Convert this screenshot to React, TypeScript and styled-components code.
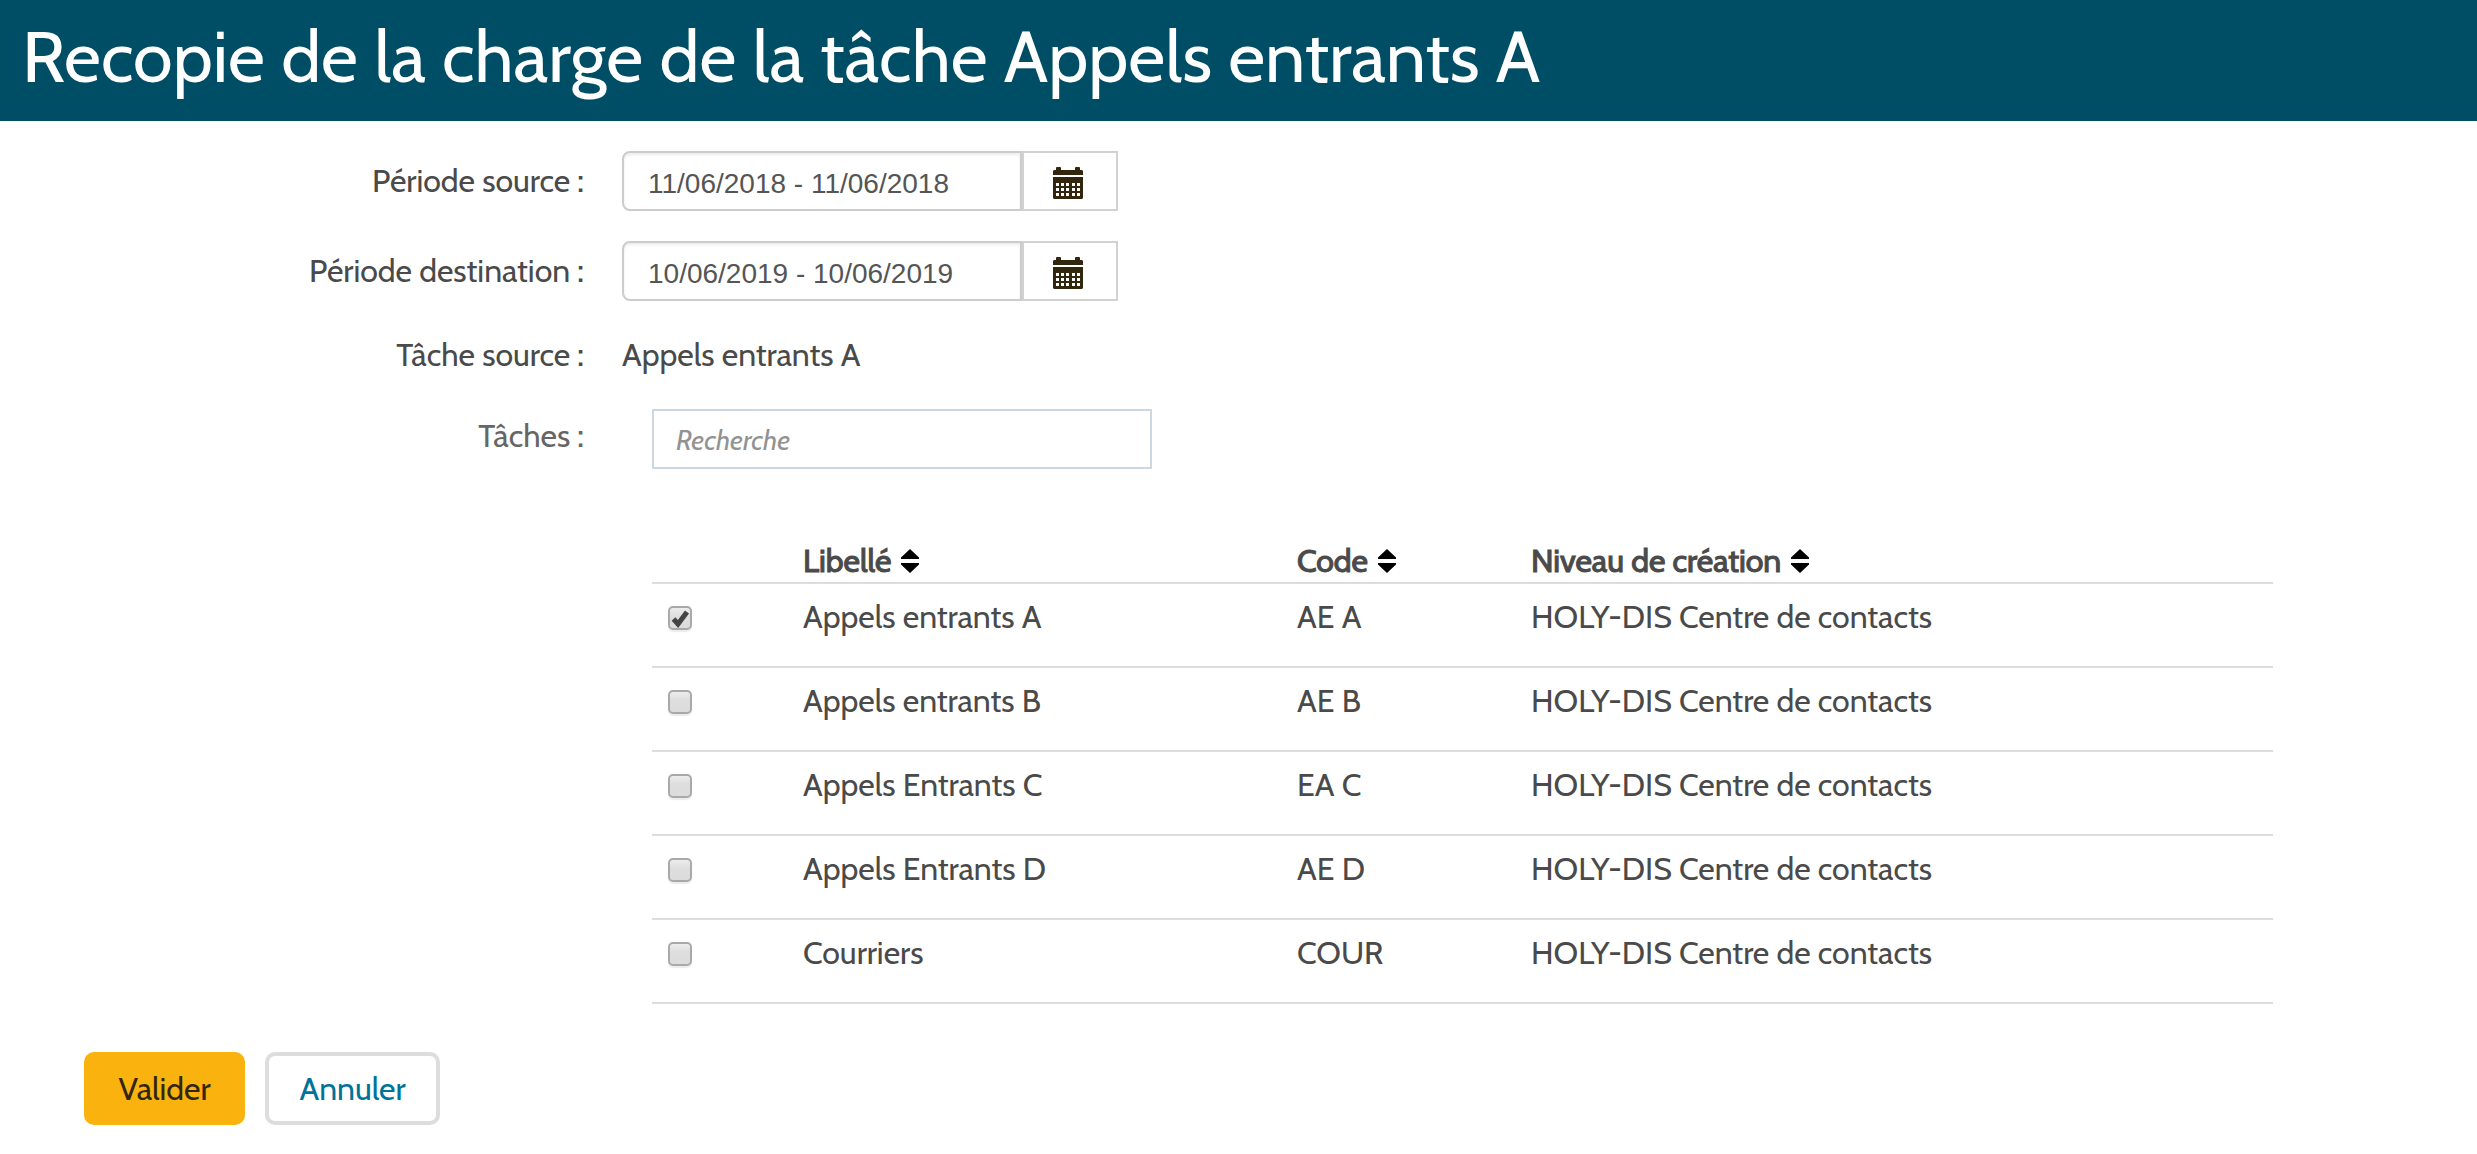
import React, { useState } from "react";
import styled, { createGlobalStyle } from "styled-components";

const GlobalStyle = createGlobalStyle`
  *, *::before, *::after { box-sizing: border-box; }
  body {
    margin: 0;
    background: #fff;
    color: #4a4a4a;
    font-family: Cabin, Lato, "Liberation Sans", sans-serif;
    font-size: 32px;
    line-height: 40px;
  }
  button, input { font: inherit; color: inherit; }
`;

const Header = styled.header`
  background: #004e66;
  color: #fff;
  padding: 13px 22px 20px;
`;

const Title = styled.h1`
  margin: 0;
  font-size: 72px;
  line-height: 88px;
  font-weight: 400;
`;

const Form = styled.form`
  display: flex;
  flex-direction: column;
  padding: 30px 204px 0 0;
`;

const Field = styled.div<{ $gap: number; $top: number; $muted?: boolean }>`
  display: grid;
  grid-template-columns: 584px minmax(0, 1fr);
  column-gap: 38px;
  margin-bottom: ${(p) => p.$gap}px;

  & > :first-child {
    text-align: right;
    padding-top: ${(p) => p.$top}px;
    color: ${(p) => (p.$muted ? "#666" : "inherit")};
  }
`;

const FieldName = styled.span``;
const FieldLabel = styled.label``;

const SourceTask = styled.output`
  padding-top: 4px;
`;

const DateGroup = styled.div`
  display: flex;
  height: 60px;
`;

const DateInput = styled.input`
  width: 400px;
  padding: 6px 24px 0;
  border: 2px solid #ccc;
  border-radius: 8px 0 0 8px;
  box-shadow: inset 0 2px 3px rgba(0, 0, 0, 0.08);
  background: #fff;
  color: #555;
  font-family: "Liberation Sans", Arial, sans-serif;
  font-size: 28px;
  outline: none;
`;

const CalendarButton = styled.button`
  display: flex;
  align-items: center;
  justify-content: center;
  width: 96px;
  padding: 4px 4px 0 0;
  border: 2px solid #d2d2d2;
  background: #fff;
  cursor: pointer;
`;

const SearchInput = styled.input`
  width: 500px;
  height: 60px;
  margin-left: 30px;
  padding: 2px 22px 0;
  border: 2px solid #cbd8e1;
  background: #fff;
  font-size: 28px;
  outline: none;

  &::placeholder {
    color: #929292;
    font-style: italic;
    opacity: 1;
  }
`;

const TaskTable = styled.table`
  margin-left: 652px;
  border-collapse: separate;
  border-spacing: 0;
  table-layout: fixed;
`;

const Column = styled.col<{ $width?: number }>`
  width: ${(p) => (p.$width ? `${p.$width}px` : "auto")};
`;

const HeadCell = styled.th`
  padding: 0 0 1px;
  border-bottom: 2px solid #ddd;
  text-align: left;
  font-weight: 400;
  -webkit-text-stroke: 1px currentColor;
`;

const SortButton = styled.button`
  display: flex;
  align-items: center;
  gap: 10px;
  padding: 0;
  border: 0;
  background: none;
  cursor: pointer;
`;

const Cell = styled.td`
  height: 84px;
  padding: 13px 0 0;
  border-bottom: 2px solid #ddd;
  vertical-align: top;
`;

const CheckCell = styled(Cell)`
  padding: 22px 0 0 16px;
`;

const CheckFrame = styled.span`
  display: grid;
  width: 24px;
  height: 24px;

  & > * { grid-area: 1 / 1; }
`;

const CheckBox = styled.input`
  appearance: none;
  width: 24px;
  height: 24px;
  margin: 0;
  border: 2px solid #a9a9a9;
  border-radius: 5px;
  background: linear-gradient(#ededed, #dedede 40%, #dcdcdc);
  box-shadow: 0 2px 1px rgba(0, 0, 0, 0.08);
  cursor: pointer;
`;

const CheckMark = styled.svg`
  pointer-events: none;
`;

const Actions = styled.div`
  display: flex;
  gap: 20px;
  padding: 48px 0 28px 84px;
`;

const ActionButton = styled.button<{ $primary?: boolean }>`
  width: ${(p) => (p.$primary ? 161 : 175)}px;
  height: 73px;
  padding: 0;
  border: 4px solid ${(p) => (p.$primary ? "#fab20e" : "#ddd")};
  border-radius: 10px;
  background: ${(p) => (p.$primary ? "#fab20e" : "#fff")};
  color: ${(p) => (p.$primary ? "#33260f" : "#007399")};
  cursor: pointer;
`;

function CalendarIcon() {
  return (
    <svg width="30" height="32" viewBox="0 0 30 32" aria-hidden="true">
      <path
        fill="#33260f"
        d="M1 3h2V1q0-1 1-1h3q1 0 1 1v2h14V1q0-1 1-1h3q1 0 1 1v2h2l1 1v4H0V4zM0 10h30v21l-1 1H1l-1-1z"
      />
      {[16, 21, 26].map((y) =>
        [3, 8, 13, 19, 24].map((x) => (
          <rect key={`${x}-${y}`} x={x} y={y} width="3" height="3" fill="#fff" />
        ))
      )}
    </svg>
  );
}

function SortIcon() {
  return (
    <svg width="18" height="24" viewBox="0 0 18 24" fill="#000" aria-hidden="true">
      <path d="M9 0l9 8.500v1.500H0V8.500zM9 24l9-8.500V14H0v1.500z" />
    </svg>
  );
}

const tasks = [
  { label: "Appels entrants A", code: "AE A" },
  { label: "Appels entrants B", code: "AE B" },
  { label: "Appels Entrants C", code: "EA C" },
  { label: "Appels Entrants D", code: "AE D" },
  { label: "Courriers", code: "COUR" },
];

const headings = ["Libellé", "Code", "Niveau de création"];

function PeriodField({ id, label, value }: { id: string; label: string; value: string }) {
  return (
    <Field $gap={30} $top={10}>
      <FieldLabel htmlFor={id}>{label}</FieldLabel>
      <DateGroup>
        <DateInput id={id} type="text" defaultValue={value} />
        <CalendarButton type="button" aria-label="Choisir une période">
          <CalendarIcon />
        </CalendarButton>
      </DateGroup>
    </Field>
  );
}

export default function App() {
  const [checked, setChecked] = useState<string[]>(["AE A"]);
  const toggle = (code: string) =>
    setChecked((list) => (list.includes(code) ? list.filter((c) => c !== code) : [...list, code]));

  return (
    <>
      <GlobalStyle />
      <Header>
        <Title>Recopie de la charge de la tâche Appels entrants A</Title>
      </Header>
      <main>
        <Form onSubmit={(e) => e.preventDefault()}>
          <PeriodField id="source" label="Période source :" value="11/06/2018 - 11/06/2018" />
          <PeriodField id="destination" label="Période destination :" value="10/06/2019 - 10/06/2019" />
          <Field $gap={34} $top={4}>
            <FieldName>Tâche source :</FieldName>
            <SourceTask>Appels entrants A</SourceTask>
          </Field>
          <Field $gap={72} $top={7} $muted>
            <FieldLabel htmlFor="search">Tâches :</FieldLabel>
            <SearchInput id="search" type="text" placeholder="Recherche" />
          </Field>
          <TaskTable>
            <colgroup>
              <Column $width={151} />
              <Column $width={494} />
              <Column $width={234} />
              <Column />
            </colgroup>
            <thead>
              <tr>
                <HeadCell />
                {headings.map((h) => (
                  <HeadCell key={h} scope="col">
                    <SortButton type="button">
                      {h}
                      <SortIcon />
                    </SortButton>
                  </HeadCell>
                ))}
              </tr>
            </thead>
            <tbody>
              {tasks.map((t) => (
                <tr key={t.code}>
                  <CheckCell>
                    <CheckFrame>
                      <CheckBox
                        type="checkbox"
                        aria-label={t.label}
                        checked={checked.includes(t.code)}
                        onChange={() => toggle(t.code)}
                      />
                      {checked.includes(t.code) && (
                        <CheckMark width="24" height="24" viewBox="0 0 24 24" aria-hidden="true">
                          <path d="M5.500 13l4.500 5L19 6" fill="none" stroke="#444" strokeWidth="5" />
                        </CheckMark>
                      )}
                    </CheckFrame>
                  </CheckCell>
                  <Cell>{t.label}</Cell>
                  <Cell>{t.code}</Cell>
                  <Cell>HOLY-DIS Centre de contacts</Cell>
                </tr>
              ))}
            </tbody>
          </TaskTable>
          <Actions>
            <ActionButton type="submit" $primary>Valider</ActionButton>
            <ActionButton type="button">Annuler</ActionButton>
          </Actions>
        </Form>
      </main>
    </>
  );
}
